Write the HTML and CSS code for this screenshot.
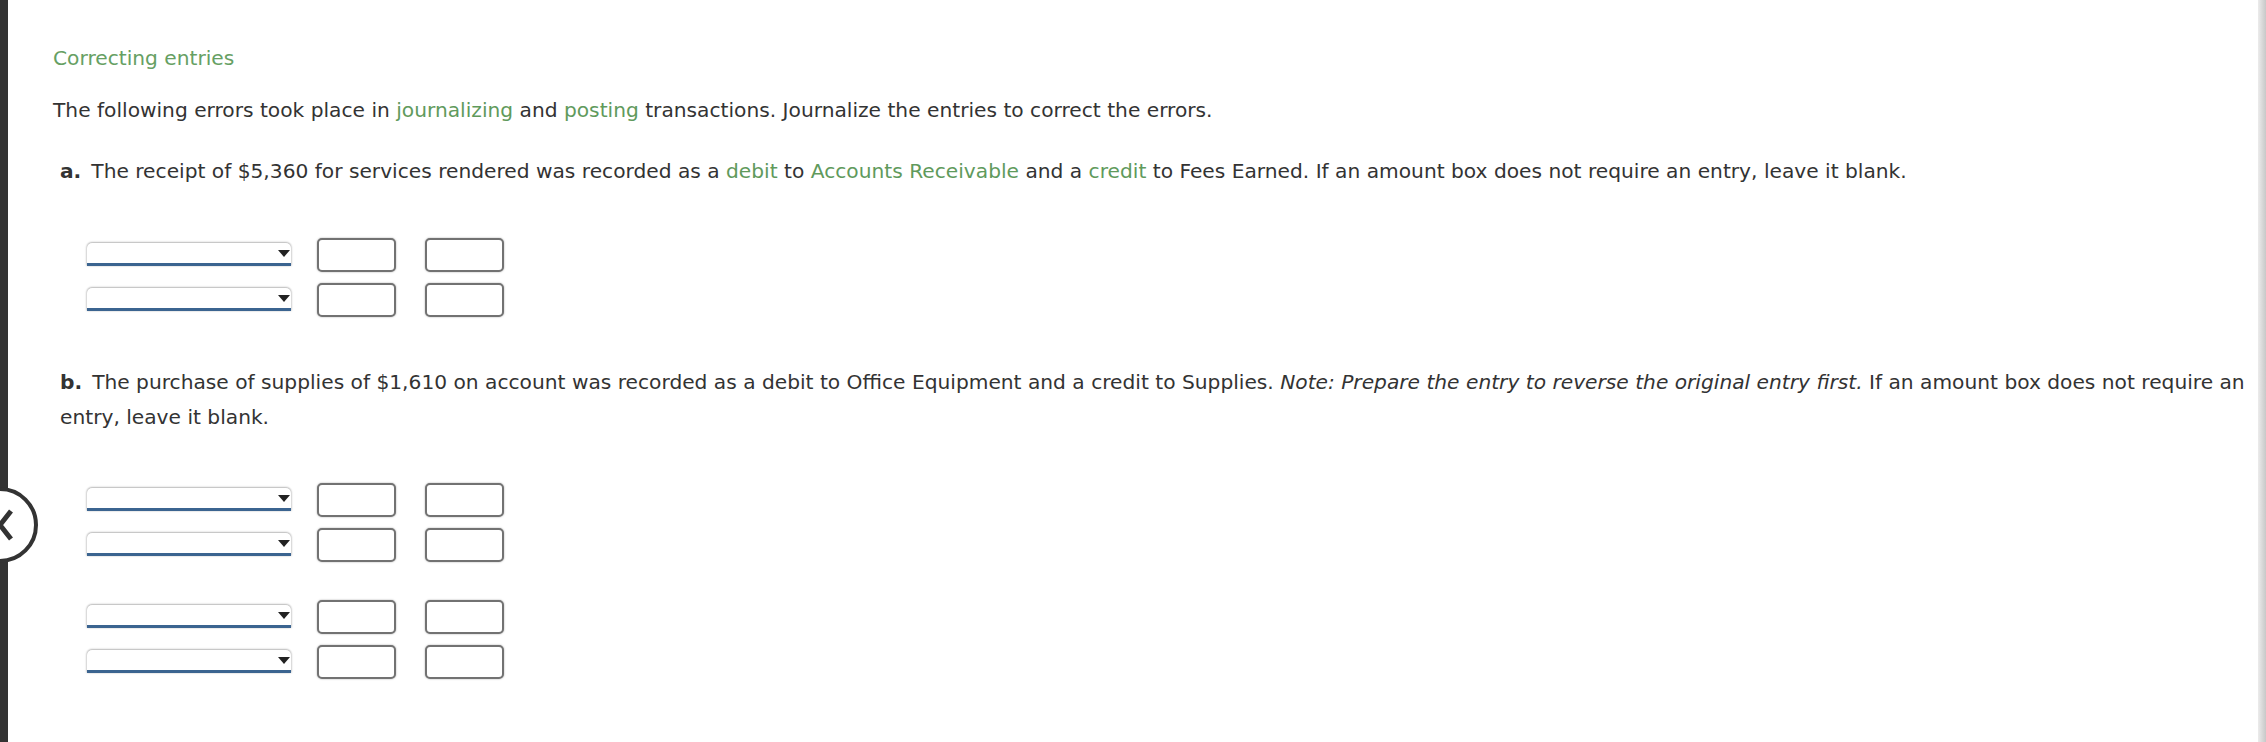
FILE: index.html
```html
<!DOCTYPE html>
<html lang="en">
<head>
<meta charset="utf-8">
<title>Correcting entries</title>
<link rel="stylesheet" href="styles.css">
</head>
<body>
<div class="page">
  <div class="rail"></div>
  <main class="main">
    <h1 class="title">Correcting entries</h1>
    <p class="intro">The following errors took place in <span class="term">journalizing</span> and <span class="term">posting</span> transactions. Journalize the entries to correct the errors.</p>

    <p class="part"><b class="label">a.</b>The receipt of $5,360 for services rendered was recorded as a <span class="term">debit</span> to <span class="term">Accounts Receivable</span> and a <span class="term">credit</span> to Fees Earned. If an amount box does not require an entry, leave it blank.</p>

    <div class="journal journal-a">
      <div class="entry">
        <div class="row">
          <div class="pick"><select class="acct"><option></option></select></div>
          <input class="amt" type="text">
          <input class="amt" type="text">
        </div>
        <div class="row">
          <div class="pick"><select class="acct"><option></option></select></div>
          <input class="amt" type="text">
          <input class="amt" type="text">
        </div>
      </div>
    </div>

    <p class="part part-b"><b class="label">b.</b>The purchase of supplies of $1,610 on account was recorded as a debit to Office Equipment and a credit to Supplies. <i>Note: Prepare the entry to reverse the original entry first.</i> If an amount box does not require an entry, leave it blank.</p>

    <div class="journal journal-b">
      <div class="entry">
        <div class="row">
          <div class="pick"><select class="acct"><option></option></select></div>
          <input class="amt" type="text">
          <input class="amt" type="text">
        </div>
        <div class="row">
          <div class="pick"><select class="acct"><option></option></select></div>
          <input class="amt" type="text">
          <input class="amt" type="text">
        </div>
      </div>
      <div class="entry">
        <div class="row">
          <div class="pick"><select class="acct"><option></option></select></div>
          <input class="amt" type="text">
          <input class="amt" type="text">
        </div>
        <div class="row">
          <div class="pick"><select class="acct"><option></option></select></div>
          <input class="amt" type="text">
          <input class="amt" type="text">
        </div>
      </div>
    </div>
  </main>
  <div class="scrollbar"></div>
  <button class="back" type="button" aria-label="Previous">
    <svg width="14" height="40" viewBox="0 0 14 40" aria-hidden="true"><path d="M11 6 L0 20 L11 34" fill="none" stroke="#333" stroke-width="5" stroke-linecap="butt" stroke-linejoin="miter"/></svg>
  </button>
</div>
</body>
</html>
```

FILE: styles.css
```css
html, body {
  margin: 0;
  padding: 0;
  background: #fff;
}

body {
  font-family: "DejaVu Sans", Verdana, sans-serif;
  font-size: 20.2px;
  color: #333;
}

.page {
  position: relative;
  display: flex;
  height: 742px;
  overflow: hidden;
}

.rail {
  width: 8px;
  flex: 0 0 8px;
  background: #333;
}

.scrollbar {
  width: 8px;
  flex: 0 0 8px;
  background: linear-gradient(to right, #ececec, #d6d6d6 60%, #c8c8c8);
}

.main {
  flex: 1;
  padding: 41px 0 0 45px;
}

.title {
  margin: 0;
  font-size: 20.2px;
  font-weight: normal;
  line-height: 35px;
  color: #66a063;
}

.intro {
  margin: 17px 0 0;
  line-height: 35px;
}

.term {
  color: #5f9a5c;
}

.part {
  margin: 26px 0 0;
  padding-left: 7px;
  line-height: 35px;
}

.label {
  font-weight: bold;
  display: inline-block;
  margin-right: 10px;
}

.part-b {
  margin-top: 48px;
}

.journal {
  margin-top: 48px;
  padding-left: 34px;
  display: flex;
  flex-direction: column;
  gap: 37px;
}

.journal-b {
  margin-top: 47px;
}

.entry {
  display: flex;
  flex-direction: column;
  gap: 10px;
}

.row {
  display: flex;
  align-items: center;
  height: 35px;
}

.pick {
  position: relative;
  width: 204px;
  height: 23px;
  margin-right: 26px;
}

.pick::after {
  content: "";
  position: absolute;
  right: 1px;
  top: 7px;
  border-left: 6px solid transparent;
  border-right: 6px solid transparent;
  border-top: 7px solid #222;
  pointer-events: none;
}

.acct {
  appearance: none;
  -webkit-appearance: none;
  display: block;
  width: 204px;
  height: 23px;
  margin: 0;
  padding: 0;
  box-sizing: border-box;
  background: #fff;
  border: none;
  border-bottom: 3px solid #3b6490;
  border-radius: 5px 5px 0 0;
  box-shadow: 0 -1px 2px rgba(0, 0, 0, 0.22), 1px 0 2px rgba(0, 0, 0, 0.12), -1px 0 2px rgba(0, 0, 0, 0.12);
  font: inherit;
}

.amt {
  width: 79px;
  height: 34px;
  margin: 0 29px 0 0;
  padding: 0;
  box-sizing: border-box;
  border: 2px solid #727272;
  border-radius: 5px;
  background: #fff;
  box-shadow: 0 0 2px rgba(0, 0, 0, 0.35);
  font: inherit;
}

.back {
  position: absolute;
  left: -38px;
  top: 487px;
  width: 76px;
  height: 76px;
  box-sizing: border-box;
  border: 4px solid #333;
  border-radius: 50%;
  background: #fff;
  padding: 0 0 0 38px;
  margin: 0;
  display: flex;
  align-items: center;
  justify-content: flex-start;
}

.back svg {
  display: block;
  margin-left: -4px;
}
```
